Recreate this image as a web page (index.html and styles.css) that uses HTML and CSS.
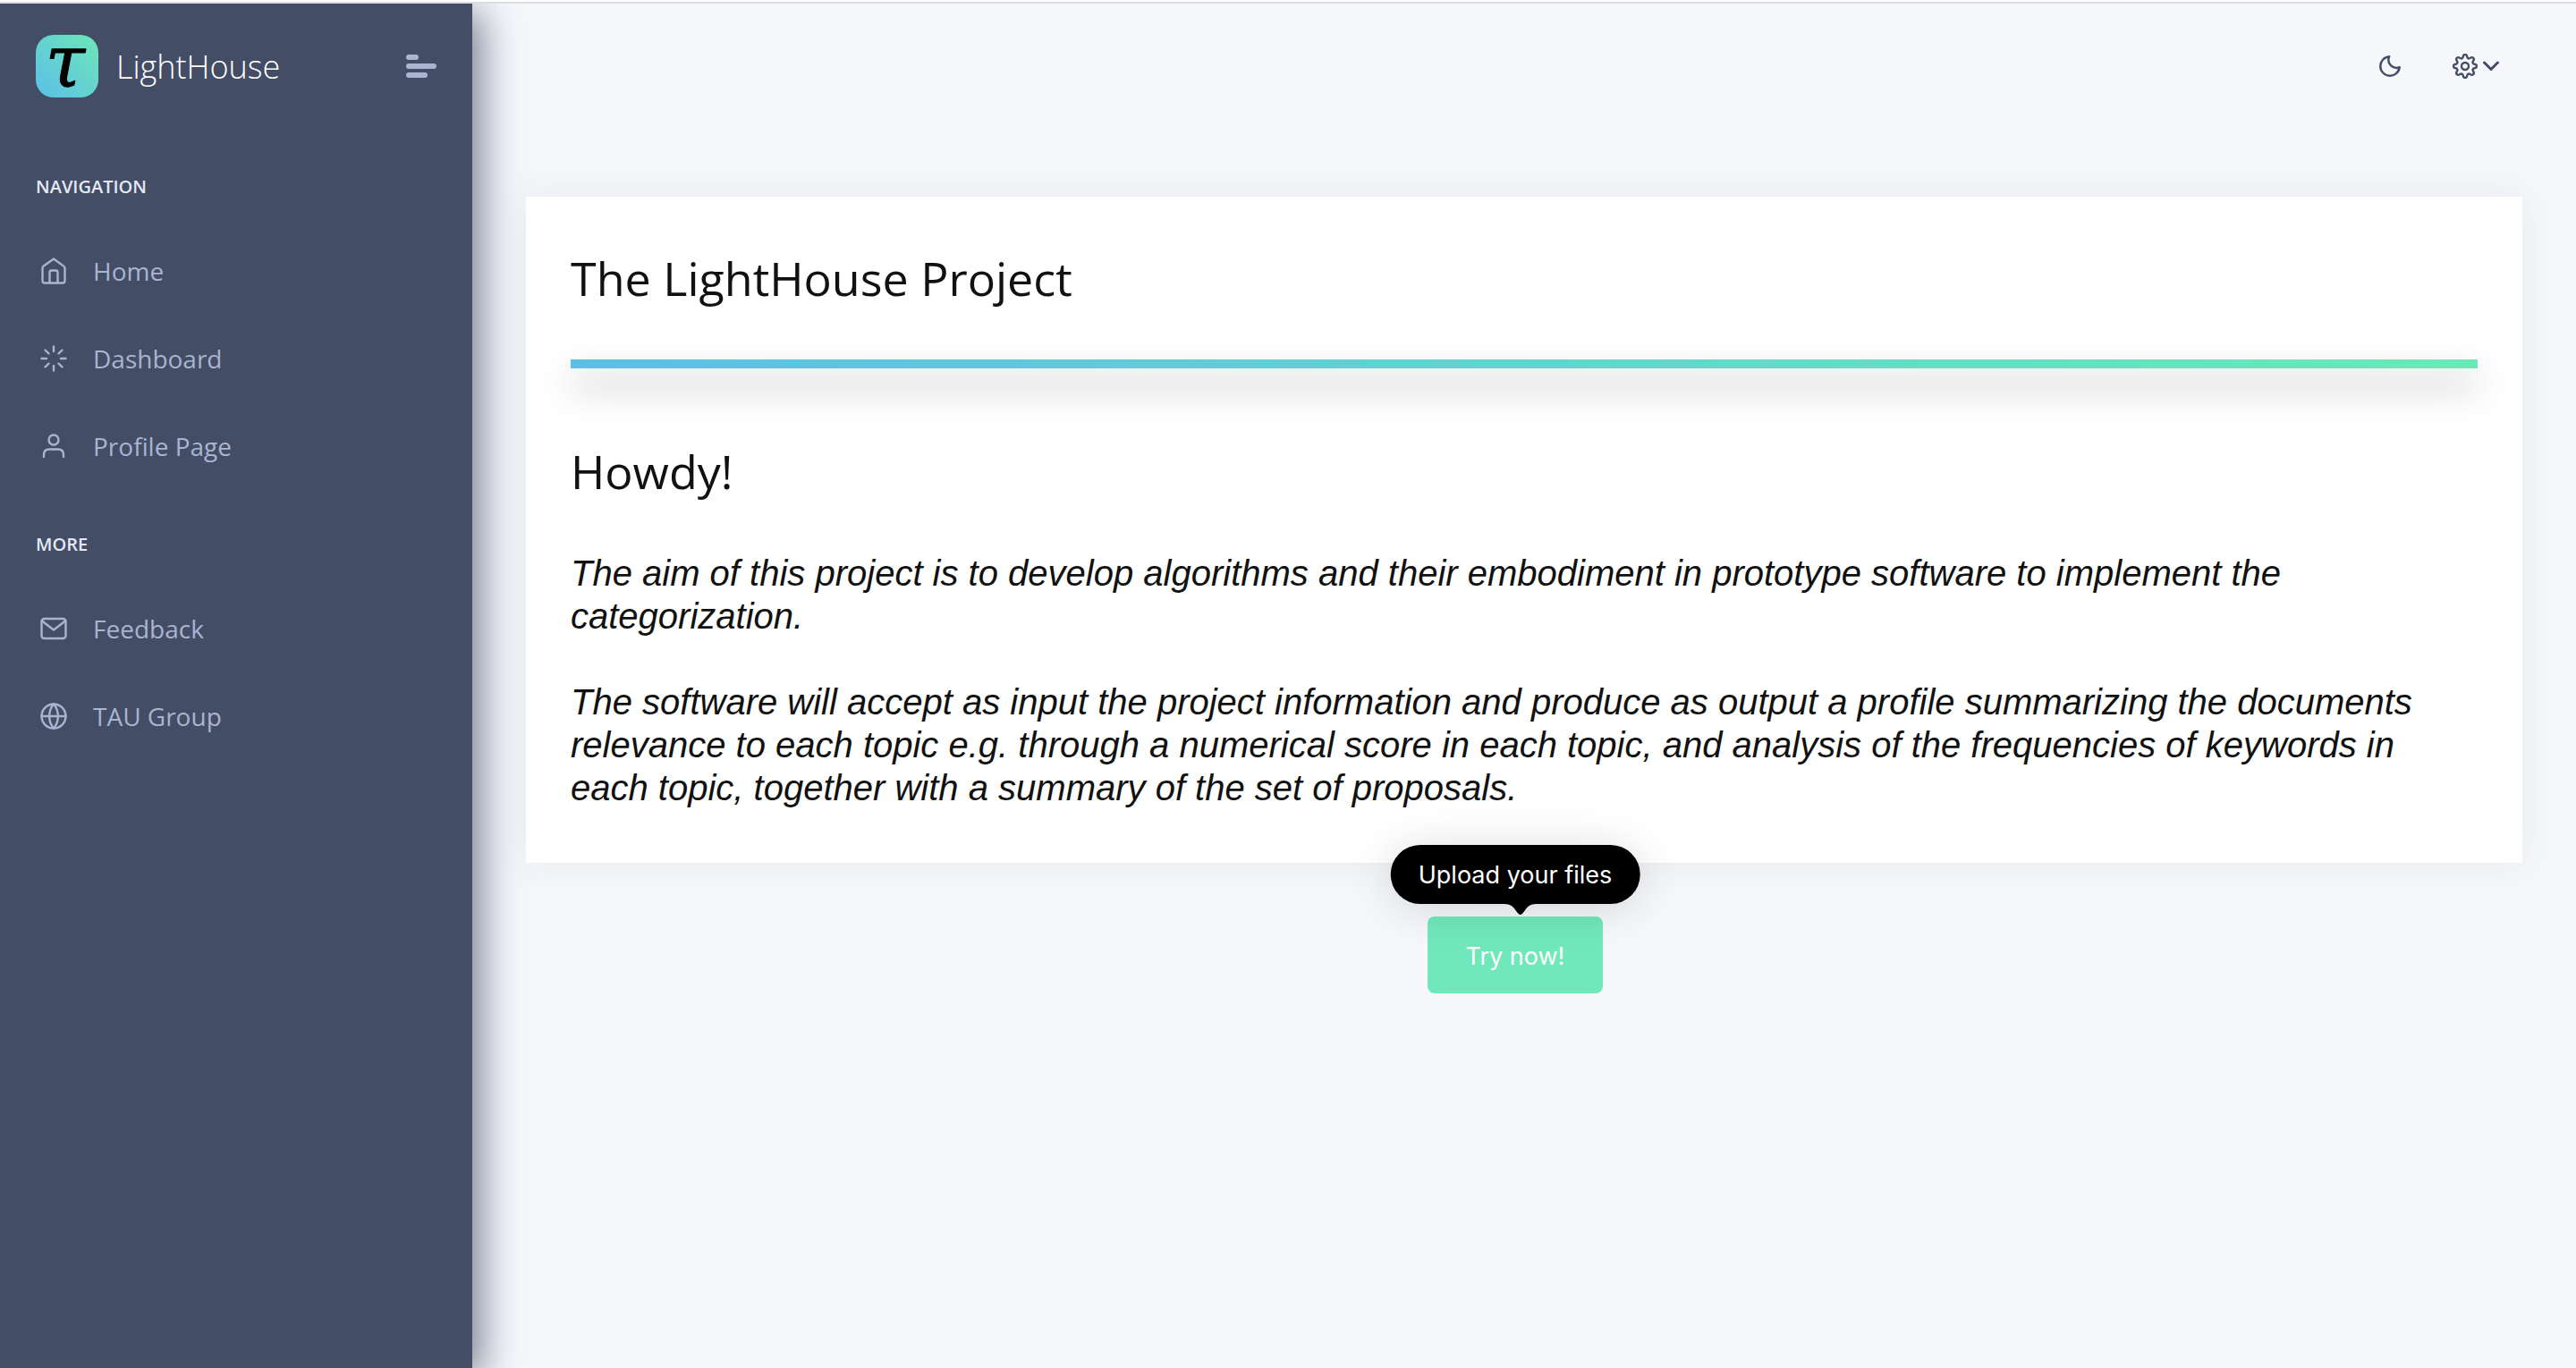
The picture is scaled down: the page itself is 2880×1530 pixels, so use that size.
FILE: index.html
```html
<!DOCTYPE html>
<html lang="en">
<head>
<meta charset="utf-8">
<title>LightHouse</title>
<link rel="stylesheet" href="styles.css">
</head>
<body>
<div class="top-rule"></div>
<div class="layout">
  <aside class="sidebar">
    <div class="brand">
      <a class="brand-link" href="#">
        <svg class="logo" viewBox="0 0 70 70" aria-hidden="true">
          <defs>
            <linearGradient id="mark" x1="0" y1="1" x2="1" y2="0">
              <stop offset="0" stop-color="#5bbfe8"/>
              <stop offset="1" stop-color="#6ee7b7"/>
            </linearGradient>
          </defs>
          <rect width="70" height="70" rx="20" fill="url(#mark)"/>
          <text class="logo-letter" x="33" y="58" text-anchor="middle">τ</text>
        </svg>
        <span>LightHouse</span>
      </a>
      <button class="menu-toggle" type="button" aria-label="Toggle menu"><i></i><i></i><i></i></button>
    </div>
    <nav>
      <h2 class="nav-title">NAVIGATION</h2>
      <ul class="nav-list">
        <li><a href="#"><svg class="icon" viewBox="0 0 30 30"><path d="M2.500 12 Q2.500 10.500 3.800 9.600 L15 1.500 L26.200 9.600 Q27.500 10.500 27.500 12 V26 Q27.500 28.500 25 28.500 H5 Q2.500 28.500 2.500 26Z"/><path d="M10.500 28V16.500Q10.500 14.500 12.500 14.500H17.500Q19.500 14.500 19.500 16.500V28"/></svg><span>Home</span></a></li>
        <li><a href="#"><svg class="icon" viewBox="0 0 30 30"><path d="M15 1.500V7M15 23V28.500M1.500 15H7M23 15H28.500M5.500 5.500L9.500 9.500M20.500 20.500L24.500 24.500M5.500 24.500L9.500 20.500M20.500 9.500L24.500 5.500"/></svg><span>Dashboard</span></a></li>
        <li><a href="#"><svg class="icon" viewBox="0 0 30 30"><circle cx="15" cy="8" r="5.500"/><path d="M4 27V24.500Q4 18.500 10 18.500H20Q26 18.500 26 24.500V27"/></svg><span>Profile Page</span></a></li>
      </ul>
      <h2 class="nav-title">MORE</h2>
      <ul class="nav-list">
        <li><a href="#"><svg class="icon" viewBox="0 0 30 30"><rect x="1.500" y="4" width="27" height="22" rx="3"/><path d="M2 6.500L15 16.500L28 6.500"/></svg><span>Feedback</span></a></li>
        <li><a href="#"><svg class="icon" viewBox="0 0 30 30"><circle cx="15" cy="15" r="13.500"/><path d="M1.500 15H28.500M15 1.500C8.500 9 8.500 21 15 28.500M15 1.500C21.500 9 21.500 21 15 28.500"/></svg><span>TAU Group</span></a></li>
      </ul>
    </nav>
  </aside>
  <div class="page">
    <header class="toolbar">
      <button type="button" aria-label="Dark mode"><svg class="moon" viewBox="0 0 24 24"><path d="M11.200 1.200A10.800 10.800 0 1 0 22.800 13.200A9 9 0 0 1 11.200 1.200Z"/></svg></button>
      <button type="button" aria-label="Settings">
        <svg class="gear" viewBox="0 0 28 28"><circle cx="14" cy="14" r="4"/><path d="M11.700 3.500C12 .2 16 .2 16.300 3.500C16.600 5.500 18.300 6 19.800 4.900C22.400 2.900 25.100 5.600 23.100 8.200C22 9.700 22.500 11.400 24.500 11.700C27.800 12 27.800 16 24.500 16.300C22.500 16.600 22 18.300 23.100 19.800C25.100 22.400 22.400 25.100 19.800 23.100C18.300 22 16.600 22.500 16.300 24.500C16 27.800 12 27.800 11.700 24.500C11.400 22.500 9.700 22 8.200 23.100C5.600 25.100 2.900 22.400 4.900 19.800C6 18.300 5.500 16.600 3.500 16.300C.2 16 .2 12 3.500 11.700C5.500 11.400 6 9.700 4.900 8.200C2.900 5.600 5.600 2.900 8.200 4.900C9.700 6 11.400 5.500 11.700 3.500Z"/></svg>
        <svg class="chevron" viewBox="0 0 18 12"><path d="M1.500 2L9 9.500L16.500 2"/></svg>
      </button>
    </header>
    <main class="content">
      <section class="card">
        <h1>The LightHouse Project</h1>
        <hr class="divider">
        <h2>Howdy!</h2>
        <p>The aim of this project is to develop algorithms and their embodiment in prototype software to implement the categorization.</p>
        <p>The software will accept as input the project information and produce as output a profile summarizing the documents relevance to each topic e.g. through a numerical score in each topic, and analysis of the frequencies of keywords in each topic, together with a summary of the set of proposals.</p>
      </section>
      <div class="action">
        <button class="try" type="button" aria-describedby="tip">Try now!</button>
        <div class="tooltip" id="tip" role="tooltip">Upload your files<svg class="tip-arrow" viewBox="0 0 36 13"><path d="M0 0C9 0 11 5 15 10Q18 14 21 10C25 5 27 0 36 0Z"/></svg></div>
      </div>
    </main>
  </div>
</div>
</body>
</html>
```
FILE: styles.css
```css
* { box-sizing: border-box; }

body {
  margin: 0;
  min-height: 100vh;
  display: flex;
  flex-direction: column;
  background: #f5f7fb;
  color: #111;
  font-family: "Open Sans", sans-serif;
}

h1, h2, p, ul { margin: 0; padding: 0; }

button {
  border: 0;
  padding: 0;
  background: none;
  color: inherit;
  font: inherit;
  cursor: pointer;
}

a { color: inherit; text-decoration: none; }

svg { display: block; }

.top-rule {
  height: 4px;
  background: #fff;
  border-bottom: 2px solid #dbdcde;
}

.layout {
  flex: 1;
  display: grid;
  grid-template-columns: 528px 1fr;
  overflow: hidden;
}

/* Sidebar */
.sidebar {
  padding: 35px 40px;
  background: #434d65;
  box-shadow: 10px 10px 40px rgba(67, 77, 101, 0.7);
}

.brand {
  display: flex;
  align-items: center;
  justify-content: space-between;
  margin-bottom: 85px;
}

.brand-link {
  display: flex;
  align-items: center;
  gap: 20px;
  color: #fff;
  font-size: 36px;
  font-weight: 300;
}

.logo { width: 70px; height: 70px; overflow: visible; }

.logo-letter {
  font: italic 80px "DejaVu Serif", serif;
  fill: #000;
  stroke: #000;
  stroke-width: 1;
  stroke-linejoin: round;
}

.menu-toggle {
  display: flex;
  flex-direction: column;
  gap: 4px;
  width: 34px;
}

.menu-toggle i {
  width: 34px;
  height: 6px;
  border-radius: 3px;
  background: #abb5d1;
}

.menu-toggle i:first-child { width: 14px; }
.menu-toggle i:last-child { width: 24px; }

.nav-title {
  margin-bottom: 30px;
  color: #e4e9f7;
  font-size: 20px;
  line-height: 30px;
  font-weight: 600;
}

.nav-list { list-style: none; }
.nav-list + .nav-title { margin-top: 46px; }

.nav-list a {
  display: flex;
  align-items: center;
  gap: 29px;
  height: 98px;
  padding-left: 5px;
  color: #a9b4d0;
  font-size: 28px;
}

.icon, .moon, .gear, .chevron {
  fill: none;
  stroke: currentColor;
  stroke-width: 2.4;
  stroke-linecap: round;
  stroke-linejoin: round;
}

.icon { width: 30px; height: 30px; }

/* Page */
.toolbar {
  display: flex;
  align-items: center;
  justify-content: flex-end;
  gap: 58px;
  height: 140px;
  padding: 0 86px;
  color: #434d65;
}

.toolbar button {
  display: flex;
  align-items: center;
  gap: 6px;
}

.moon { width: 24px; height: 24px; }
.gear { width: 28px; height: 28px; }
.chevron { width: 18px; height: 12px; stroke-width: 3; }

.content { padding: 76px 60px; }

.card {
  padding: 60px 50px;
  background: #fff;
  box-shadow: 0 0 40px rgba(60, 75, 80, 0.08);
}

.card h1, .card h2 {
  font-size: 52px;
  line-height: 62px;
  font-weight: 400;
}

.card h2 { margin: 84px 0 59px; }

.divider {
  height: 10px;
  margin: 60px 0 0;
  border: 0;
  background: linear-gradient(90deg, #5bbfe6, #6ee7b7);
  box-shadow: 0 20px 40px rgba(0, 0, 0, 0.32);
}

.card p {
  font: italic 40px/48px "Liberation Sans", Arial, sans-serif;
}

.card p + p { margin-top: 48px; }

.action {
  position: relative;
  width: 196px;
  margin: 60px auto 0;
  right: 10px;
  font-family: Inter, sans-serif;
  font-size: 27px;
}

.try {
  width: 100%;
  height: 86px;
  padding-top: 2px;
  border-radius: 8px;
  background: #70e8bb;
  color: #fff;
}

.tooltip {
  position: absolute;
  bottom: calc(100% + 14px);
  left: 50%;
  transform: translateX(-50%);
  padding: 17px 31px 15px;
  border-radius: 33px;
  background: #000;
  color: #fff;
  line-height: 34px;
  white-space: nowrap;
  box-shadow: 0 4px 50px rgba(0, 0, 0, 0.14);
}

.tip-arrow {
  position: absolute;
  top: 100%;
  left: 50%;
  width: 36px;
  height: 13px;
  margin-left: -12px;
}
```
